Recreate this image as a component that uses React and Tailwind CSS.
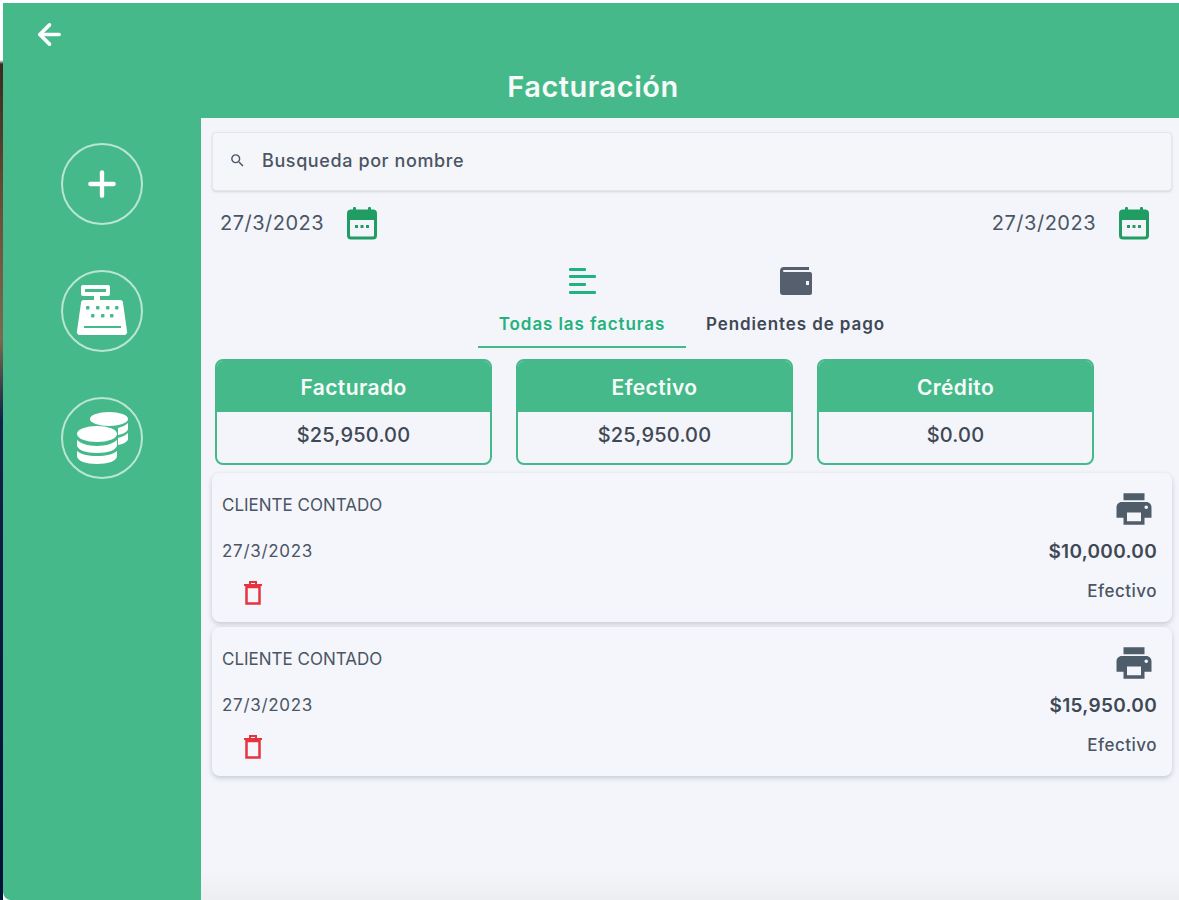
import { ArrowLeft, Plus } from 'lucide-react'
import { MdPrint, MdSearch } from 'react-icons/md'

const fontStack = { fontFamily: 'Inter, "Liberation Sans", sans-serif' }

const totals = [
  { label: 'Facturado', value: '$25,950.00' },
  { label: 'Efectivo', value: '$25,950.00' },
  { label: 'Crédito', value: '$0.00' }
]

const invoices = [
  { id: 1, client: 'CLIENTE CONTADO', date: '27/3/2023', amount: '$10,000.00', method: 'Efectivo' },
  { id: 2, client: 'CLIENTE CONTADO', date: '27/3/2023', amount: '$15,950.00', method: 'Efectivo' }
]

function CalendarIcon() {
  return (
    <svg width="32" height="36" viewBox="0 0 32 36" className="text-[#1f9d63]">
      <rect x="2.5" y="6" width="27" height="27" rx="2.5" fill="none" stroke="currentColor" strokeWidth="3" />
      <path d="M3 6h26v9H3z" fill="currentColor" />
      <rect x="7" y="2" width="3" height="6" rx="1" fill="currentColor" />
      <rect x="22" y="2" width="3" height="6" rx="1" fill="currentColor" />
      <rect x="9" y="20" width="3" height="3" fill="currentColor" />
      <rect x="14.5" y="20" width="3" height="3" fill="currentColor" />
      <rect x="20" y="20" width="3" height="3" fill="currentColor" />
    </svg>
  )
}

function CashRegisterIcon() {
  return (
    <svg width="52" height="52" viewBox="0 0 52 52" fill="white">
      <path fillRule="evenodd" d="M7 0h25a2 2 0 0 1 2 2v7a2 2 0 0 1-2 2H24v4h20a3 3 0 0 1 3 3l4 28a3 3 0 0 1-3 4H4a3 3 0 0 1-3-4l4-28a3 3 0 0 1 3-3h10v-4H7a2 2 0 0 1-2-2V2a2 2 0 0 1 2-2zm2 4v3h21V4z" />
      <g fill="#46b98a">
        <rect x="10" y="21" width="3.5" height="3.5" rx="1" />
        <rect x="20" y="21" width="3.5" height="3.5" rx="1" />
        <rect x="30" y="21" width="3.5" height="3.5" rx="1" />
        <rect x="39" y="21" width="3.5" height="3.5" rx="1" />
        <rect x="15" y="29" width="3.5" height="3.5" rx="1" />
        <rect x="25" y="29" width="3.5" height="3.5" rx="1" />
        <rect x="34" y="29" width="3.5" height="3.5" rx="1" />
        <rect x="8" y="41" width="37" height="2" />
      </g>
    </svg>
  )
}

function CoinsIcon() {
  return (
    <svg width="52" height="52" viewBox="0 0 52 52" fill="white">
      <ellipse cx="33" cy="7" rx="19" ry="7" />
      <path d="M42 16c4-1 8-3 10-5v6c0 2-4 5-10 6zM42 26c4-1 8-3 10-5v6c0 2-4 5-10 6z" />
      <ellipse cx="21" cy="22" rx="20" ry="8" />
      <path d="M1 28c3 3 11 6 20 6s17-3 20-6v5c0 5-9 8-20 8S1 38 1 33z" />
      <path d="M1 39c3 3 11 5 20 5s17-2 20-5v5c0 5-9 8-20 8S1 49 1 44z" />
    </svg>
  )
}

function BarsIcon() {
  return (
    <svg width="28" height="28" viewBox="0 0 28 28" fill="currentColor" className="text-[#1fb47f]">
      <rect x="1" y="1" width="17" height="3" rx="1" />
      <rect x="1" y="8" width="27" height="3" rx="1" />
      <rect x="1" y="16" width="17" height="3" rx="1" />
      <rect x="1" y="24" width="27" height="3" rx="1" />
    </svg>
  )
}

function WalletIcon() {
  return (
    <svg width="32" height="28" viewBox="0 0 32 28" className="text-[#555f6e]">
      <path fill="currentColor" fillRule="evenodd" d="M4 0h25v3H4a1 1 0 0 0 0 2h26a2 2 0 0 1 2 2v19a2 2 0 0 1-2 2H3a3 3 0 0 1-3-3V4a4 4 0 0 1 4-4zm22 14v4h3v-4z" />
    </svg>
  )
}

function TrashIcon() {
  return (
    <svg width="20" height="24" viewBox="0 0 20 24" className="text-[#e5343f]">
      <path d="M1 4h18M7 3V1h6v2" fill="none" stroke="currentColor" strokeWidth="2" />
      <rect x="3.5" y="6" width="13" height="16.5" fill="none" stroke="currentColor" strokeWidth="2.5" />
    </svg>
  )
}

function SideButton({ children }) {
  return (
    <button className="flex h-[82px] w-[82px] items-center justify-center rounded-full border-2 border-[#b9e6d3]">
      {children}
    </button>
  )
}

function DateField() {
  return (
    <div className="flex items-center gap-[22px]">
      <span className="text-[20px] tracking-[0.5px] text-[#4b5563]">27/3/2023</span>
      <CalendarIcon />
    </div>
  )
}

export default function App() {
  return (
    <div style={fontStack} className="flex h-[900px] w-[1179px] overflow-hidden bg-white">
      <div className="w-[3px] shrink-0 bg-[linear-gradient(180deg,#ffffff_0,#ffffff_60px,#3a2a20_64px,#6d5238_220px,#7a6a50_340px,#10214a_420px,#0a1540_700px,#03103a_900px)]" />
      <div className="flex min-w-0 flex-1 flex-col pt-[3px]">
        <header className="relative h-[115px] shrink-0 bg-[#46b98a]">
          <ArrowLeft size={33} strokeWidth={2.6} className="absolute left-[30px] top-[15px] text-white" />
          <h1 className="pt-[66px] pl-[4px] text-center text-[29px] leading-[36px] font-semibold tracking-[0.5px] text-[#f6fbf9]">
            Facturación
          </h1>
        </header>

        <div className="flex min-h-0 flex-1">
          <aside className="flex w-[198px] shrink-0 flex-col items-center gap-[45px] rounded-bl-lg bg-[#46b98a] pt-[25px]">
            <SideButton>
              <Plus size={40} strokeWidth={2.6} className="text-white" />
            </SideButton>
            <SideButton>
              <CashRegisterIcon />
            </SideButton>
            <SideButton>
              <CoinsIcon />
            </SideButton>
          </aside>

          <main className="min-w-0 flex-1 bg-[linear-gradient(180deg,#f3f5fa_0,#f3f5fa_96%,#eceef1_100%)] pt-[14px] pr-[7px] pl-[11px]">
            <div className="flex h-[59px] items-center rounded border border-[#e3e5ea] bg-[#f4f6fa] pb-[2px] pl-[16px] shadow-sm">
              <MdSearch size={17} className="text-[#4b5563]" />
              <span className="ml-[16px] text-[18px] font-medium tracking-[0.6px] text-[#4b5563]">Busqueda por nombre</span>
            </div>

            <div className="mt-[14px] flex h-[36px] items-center justify-between pr-[22px] pl-[8px]">
              <DateField />
              <DateField />
            </div>

            <div className="mt-[26px] flex pl-[266px]">
              <div className="flex w-[208px] flex-col items-center border-b-2 border-[#46b98a] pb-[11px]">
                <BarsIcon />
                <span className="mt-[18px] text-[17px] leading-[22px] font-semibold tracking-[0.9px] text-[#23b27c]">Todas las facturas</span>
              </div>
              <div className="flex w-[219px] flex-col items-center pb-[11px]">
                <WalletIcon />
                <span className="mt-[18px] text-[17px] leading-[22px] font-semibold tracking-[0.9px] text-[#3f4855]">Pendientes de pago</span>
              </div>
            </div>

            <div className="mt-[11px] flex gap-[24px] pl-[3px]">
              {totals.map((total) => (
                <div key={total.label} className="h-[106px] w-[277px] overflow-hidden rounded-lg border-2 border-[#46b98a]">
                  <div className="flex h-[51px] items-center justify-center bg-[#46b98a] pt-[2px] text-[21px] font-semibold tracking-[0.4px] text-[#f6fbf9]">
                    {total.label}
                  </div>
                  <div className="flex h-[51px] items-center justify-center pb-[6px] text-[20px] font-medium tracking-[0.2px] text-[#3f4855]">
                    {total.value}
                  </div>
                </div>
              ))}
            </div>

            <div className="mt-[8px] flex flex-col gap-[5px]">
              {invoices.map((invoice) => (
                <div key={invoice.id} className="h-[149px] rounded-lg bg-[#f4f6fb] shadow-[0_2px_5px_rgba(60,70,90,0.25)]">
                  <div className="flex items-start justify-between pt-[16px] pr-[15px] pl-[10px]">
                    <div className="flex flex-col">
                      <span className="text-[17px] leading-[32px] text-[#4b5563]">{invoice.client}</span>
                      <span className="mt-[14px] text-[17px] leading-[32px] tracking-[0.7px] text-[#4b5563]">{invoice.date}</span>
                      <span className="mt-[14px] ml-[21px]">
                        <TrashIcon />
                      </span>
                    </div>
                    <div className="flex flex-col items-end">
                      <MdPrint size={42} className="mr-[2px] -mt-[1px] text-[#4f5c69]" />
                      <span className="mt-[6px] text-[19px] leading-[32px] font-semibold tracking-[0.3px] text-[#3f4855]">{invoice.amount}</span>
                      <span className="mt-[7px] text-[17px] leading-[32px] font-medium tracking-[0.5px] text-[#4b5563]">{invoice.method}</span>
                    </div>
                  </div>
                </div>
              ))}
            </div>
          </main>
        </div>
      </div>
    </div>
  )
}
